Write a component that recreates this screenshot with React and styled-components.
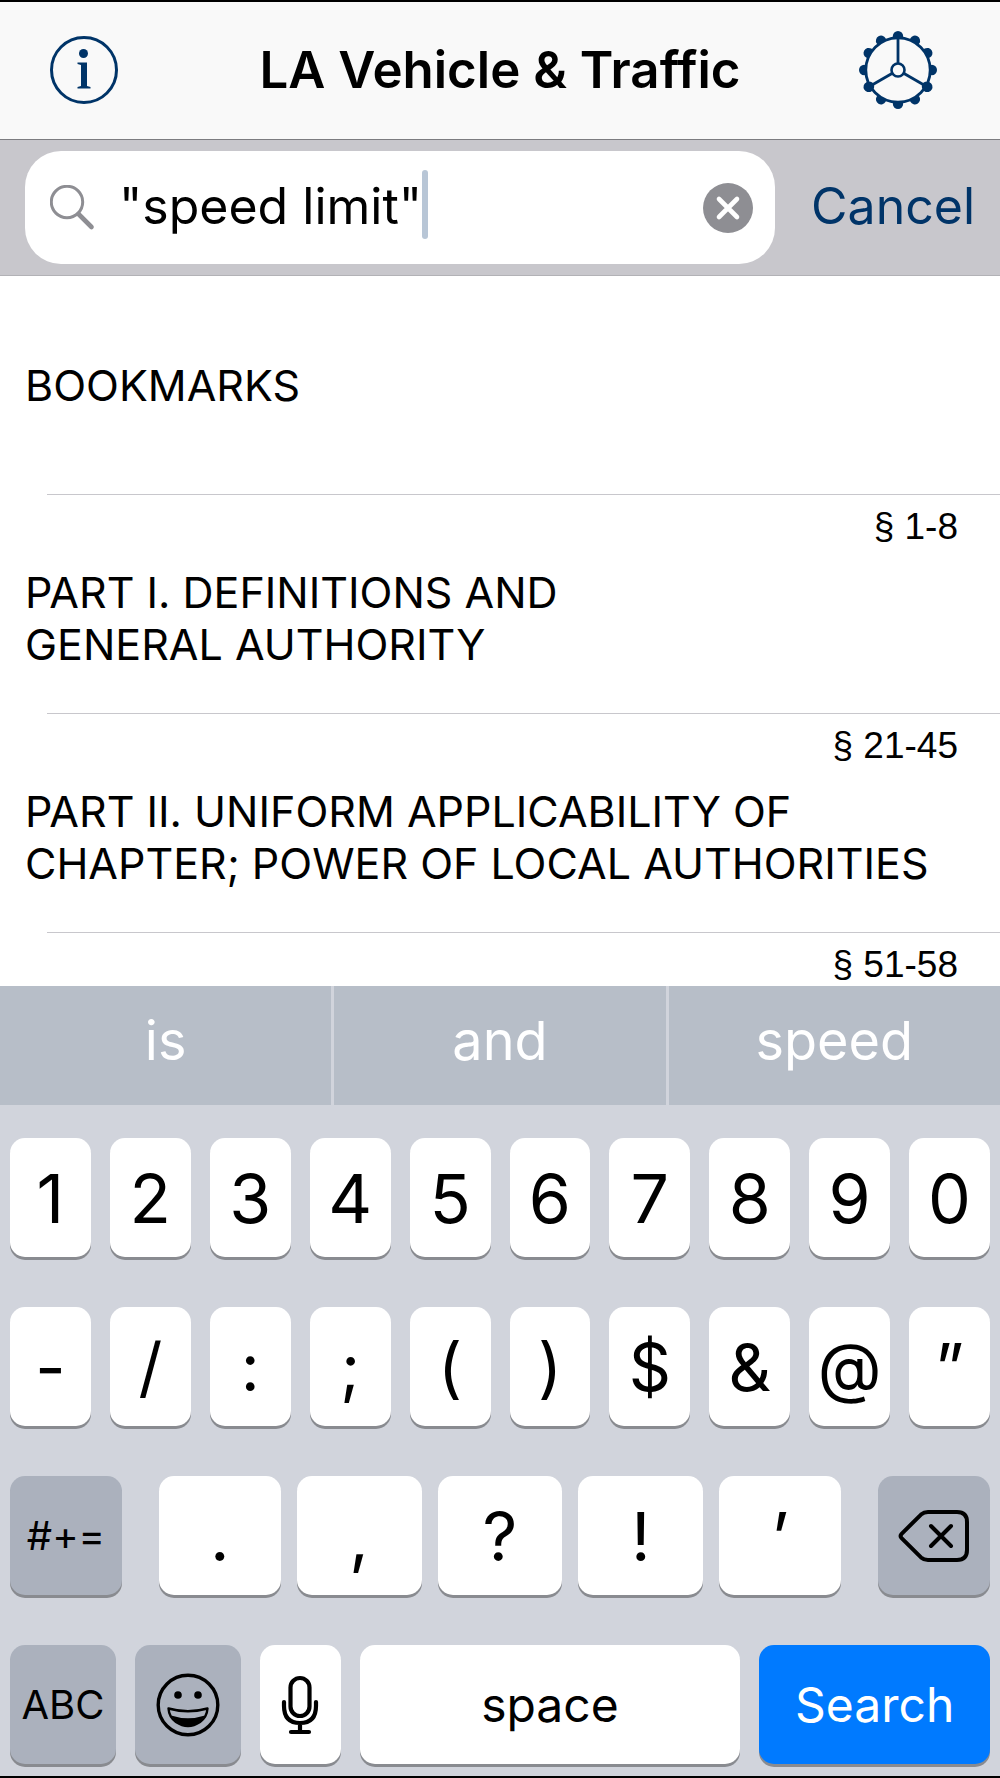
import React, { useState } from 'react';
import styled, { createGlobalStyle } from 'styled-components';

const GlobalStyle = createGlobalStyle`
  * {
    box-sizing: border-box;
  }

  body {
    margin: 0;
    background: #ffffff;
    color: #000000;
    font-family: Inter, 'Liberation Sans', sans-serif;
  }

  button, input {
    font: inherit;
    color: inherit;
    border: 0;
    margin: 0;
    padding: 0;
    background: none;
  }
`;

const Screen = styled.div`
  display: flex;
  flex-direction: column;
  height: 100vh;
  overflow: hidden;
  border-top: 2px solid #000000;
  border-bottom: 2px solid #000000;
`;

const Header = styled.header`
  display: grid;
  grid-template-columns: 1fr auto 1fr;
  align-items: center;
  flex: none;
  height: 138px;
  padding: 0 50px 2px;
  background: #f9f9f9;
  border-bottom: 1px solid #7c7c80;
`;

const Title = styled.h1`
  margin: 0;
  font-size: 51px;
  line-height: 60px;
  font-weight: 600;
`;

const HeaderButton = styled.button`
  display: flex;
  justify-self: ${(props) => (props.$end ? 'end' : 'start')};
  padding-right: ${(props) => (props.$end ? '13px' : '0')};
  color: #003468;
`;

const SearchBar = styled.form`
  display: flex;
  align-items: center;
  flex: none;
  height: 136px;
  padding: 0 25px;
  background: #c8c7cc;
  border-bottom: 1px solid #b2b2b6;
`;

const SearchField = styled.label`
  display: flex;
  align-items: center;
  flex: 1;
  min-width: 0;
  height: 113px;
  padding: 0 22px 0 25px;
  border-radius: 36px;
  background: #ffffff;
  color: #8e8e93;
`;

const SearchInput = styled.input`
  field-sizing: content;
  min-width: 0;
  margin-left: 23px;
  padding-bottom: 4px;
  font-size: 50px;
  line-height: 60px;
  color: #000000;
  caret-color: transparent;
  outline: none;
`;

const Caret = styled.span`
  flex: none;
  width: 6px;
  height: 69px;
  margin-bottom: 6px;
  border-radius: 3px;
  background: #b8c6d6;
`;

const ClearButton = styled.button`
  display: flex;
  flex: none;
  margin-left: auto;
`;

const CancelButton = styled.button`
  margin-left: 36px;
  padding-bottom: 4px;
  font-size: 50px;
  line-height: 60px;
  color: #003468;
`;

const PartList = styled.ul`
  flex: 1;
  min-height: 0;
  margin: 0;
  padding: 0;
  overflow: hidden;
  list-style: none;
`;

const Part = styled.li`
  display: flex;
  flex-direction: column;
  height: 219px;

  &::after {
    content: '';
    flex: none;
    height: 1px;
    margin-left: 47px;
    background: #c8c7cc;
  }
`;

const Sections = styled.span`
  height: 64px;
  padding: 11px 42px 0 0;
  font-family: 'Liberation Sans', Arial, sans-serif;
  font-size: 37px;
  line-height: 42px;
  text-align: right;

  & + span {
    padding-bottom: 36px;
  }
`;

const PartName = styled.span`
  display: flex;
  align-items: center;
  flex: 1;
  padding: 0 25px;
  font-size: 43px;
  line-height: 52px;
  white-space: pre-line;
`;

const Suggestions = styled.div`
  display: grid;
  grid-template-columns: repeat(3, 1fr);
  gap: 3px;
  flex: none;
  height: 119px;
  background: #d1d4dc;
`;

const Suggestion = styled.button`
  background: #b7bec8;
  color: #ffffff;
  font-size: 54px;
  line-height: 64px;
  padding-bottom: 9px;
`;

const Keyboard = styled.div`
  display: flex;
  flex-direction: column;
  gap: 50px;
  flex: none;
  padding: 33px 10px 12px;
  background: #d1d4dc;
`;

const KeyRow = styled.div`
  display: grid;
  grid-template-columns: ${(props) => props.$columns};
  gap: ${(props) => props.$gap || 19}px;
`;

const Key = styled.button`
  display: flex;
  align-items: center;
  justify-content: center;
  height: 119px;
  margin: ${(props) => props.$margin || '0'};
  border-radius: 15px;
  background: ${(props) => props.$background || '#ffffff'};
  box-shadow: 0 3px 0 #898b90;
  color: ${(props) => props.$color || '#000000'};
  font-size: ${(props) => props.$size || 68}px;
  line-height: 80px;
`;

const GREY_KEY = '#abb1bd';

const InfoIcon = () => (
  <svg width="68" height="70" viewBox="1 0 68 70" fill="none" aria-hidden="true">
    <circle cx="35" cy="35" r="32.5" stroke="currentColor" strokeWidth="3" />
    <circle cx="34.5" cy="18.5" r="4.5" fill="currentColor" />
    <path d="M28.5 27.5h9.500V51l3.500 1v1.5H28.500V52l3.500-1V30l-3.500-1z" fill="currentColor" />
  </svg>
);

const TEETH = Array.from({ length: 12 }, (_, i) => i * 30);

const GearIcon = () => (
  <svg width="78" height="78" viewBox="-39 -39 78 78" fill="none" aria-hidden="true">
    {TEETH.map((angle) => (
      <circle key={angle} cy="-33.8" r="5.2" fill="currentColor" transform={`rotate(${angle})`} />
    ))}
    <circle r="32.2" fill="#f9f9f9" stroke="currentColor" strokeWidth="2.8" />
    <circle r="6.5" stroke="currentColor" strokeWidth="2.6" />
    {[0, 120, 240].map((angle) => (
      <path key={angle} d="M0-7V-32" stroke="currentColor" strokeWidth="2.8" transform={`rotate(${angle})`} />
    ))}
    {[120, 240].map((angle) => (
      <circle key={angle} cy="-33" r="4.8" fill="currentColor" transform={`rotate(${angle})`} />
    ))}
  </svg>
);

const SearchIcon = () => (
  <svg width="46" height="46" viewBox="0 0 46 46" fill="none" stroke="currentColor" aria-hidden="true">
    <circle cx="17" cy="17" r="15.700" strokeWidth="3" />
    <path d="M28.5 29L41.5 42" strokeWidth="4.6" strokeLinecap="round" />
  </svg>
);

const ClearIcon = () => (
  <svg width="50" height="50" viewBox="0 0 50 50" aria-hidden="true">
    <circle cx="25" cy="25" r="25" fill="#8e8e93" />
    <path d="M16 16l18 18M34 16L16 34" stroke="#ffffff" strokeWidth="4.6" strokeLinecap="round" />
  </svg>
);

const DeleteIcon = () => (
  <svg width="72" height="54" viewBox="0 0 72 54" fill="none" stroke="currentColor" strokeWidth="4" strokeLinecap="round" strokeLinejoin="round" aria-hidden="true">
    <path d="M3.6 24.8L23 5.6Q26 3 30 3H59Q69 3 69 13V41Q69 51 59 51H30Q26 51 23 48.4L3.6 29.2Q1.6 27 3.6 24.8Z" />
    <path d="M33 17L53 37M53 17L33 37" />
  </svg>
);

const EmojiIcon = () => (
  <svg width="64" height="64" viewBox="0 0 64 64" fill="none" aria-hidden="true">
    <circle cx="32" cy="32" r="29.8" stroke="currentColor" strokeWidth="3.4" />
    <circle cx="22" cy="22" r="3.8" fill="currentColor" />
    <circle cx="42" cy="22" r="3.8" fill="currentColor" />
    <path d="M12.5 35.5Q32 41 51.5 35.5Q51 44 44 49Q38 53 32 53Q26 53 20 49Q13 44 12.5 35.5Z" stroke="currentColor" strokeWidth="2.4" strokeLinejoin="round" />
    <path d="M15 42.5Q32 48 49 42.5Q43 53 32 53Q21 53 15 42.5Z" fill="currentColor" />
  </svg>
);

const MicIcon = () => (
  <svg width="38" height="60" viewBox="0 0 38 60" fill="none" stroke="currentColor" strokeWidth="4.2" strokeLinecap="round" aria-hidden="true">
    <rect x="9.5" y="3" width="19" height="38" rx="9.5" />
    <path d="M3 27V31Q3 48 19 48Q35 48 35 31V27M19 48V57M10 57H28" />
  </svg>
);

const parts = [
  { name: 'BOOKMARKS' },
  { name: 'PART I. DEFINITIONS AND\nGENERAL AUTHORITY', sections: '§ 1-8' },
  { name: 'PART II. UNIFORM APPLICABILITY OF\nCHAPTER; POWER OF LOCAL AUTHORITIES', sections: '§ 21-45' },
  { name: '', sections: '§ 51-58' },
];

const suggestions = ['is', 'and', 'speed'];
const digits = ['1', '2', '3', '4', '5', '6', '7', '8', '9', '0'];
const symbols = ['-', '/', ':', ';', '(', ')', '$', '&', '@', '”'];

const App = () => {
  const [query, setQuery] = useState('"speed limit"');

  const type = (text) => setQuery(query + text);

  return (
    <>
      <GlobalStyle />
      <Screen>
        <Header>
          <HeaderButton aria-label="Info">
            <InfoIcon />
          </HeaderButton>
          <Title>LA Vehicle &amp; Traffic</Title>
          <HeaderButton $end aria-label="Settings">
            <GearIcon />
          </HeaderButton>
        </Header>

        <SearchBar onSubmit={(e) => e.preventDefault()}>
          <SearchField>
            <SearchIcon />
            <SearchInput aria-label="Search" value={query} onChange={(e) => setQuery(e.target.value)} />
            <Caret />
            <ClearButton type="button" aria-label="Clear" onClick={() => setQuery('')}>
              <ClearIcon />
            </ClearButton>
          </SearchField>
          <CancelButton type="button">Cancel</CancelButton>
        </SearchBar>

        <PartList>
          {parts.map((part) => (
            <Part key={part.name}>
              {part.sections && <Sections>{part.sections}</Sections>}
              <PartName>{part.name}</PartName>
            </Part>
          ))}
        </PartList>

        <Suggestions>
          {suggestions.map((word) => (
            <Suggestion key={word} onClick={() => type(` ${word}`)}>{word}</Suggestion>
          ))}
        </Suggestions>

        <Keyboard>
          <KeyRow $columns="repeat(10, 1fr)">
            {digits.map((key) => (
              <Key key={key} onClick={() => type(key)}>{key}</Key>
            ))}
          </KeyRow>
          <KeyRow $columns="repeat(10, 1fr)">
            {symbols.map((key) => (
              <Key key={key} $size={66} onClick={() => type(key)}>{key}</Key>
            ))}
          </KeyRow>
          <KeyRow $columns="112fr 143fr 125fr 125fr 125fr 143fr 112fr" $gap={16}>
            <Key $background={GREY_KEY} $size={40}>#+=</Key>
            <Key $margin="0 0 0 21px" onClick={() => type('.')}>.</Key>
            <Key onClick={() => type(',')}>,</Key>
            <Key onClick={() => type('?')}>?</Key>
            <Key onClick={() => type('!')}>!</Key>
            <Key $margin="0 21px 0 0" onClick={() => type('’')}>’</Key>
            <Key $background={GREY_KEY} aria-label="Delete" onClick={() => setQuery(query.slice(0, -1))}>
              <DeleteIcon />
            </Key>
          </KeyRow>
          <KeyRow $columns="106fr 106fr 81fr 381fr 231fr">
            <Key $background={GREY_KEY} $size={40}>ABC</Key>
            <Key $background={GREY_KEY} aria-label="Emoji">
              <EmojiIcon />
            </Key>
            <Key aria-label="Dictate">
              <MicIcon />
            </Key>
            <Key $size={48} onClick={() => type(' ')}>space</Key>
            <Key $background="#007aff" $color="#ffffff" $size={48}>Search</Key>
          </KeyRow>
        </Keyboard>
      </Screen>
    </>
  );
};

export default App;
